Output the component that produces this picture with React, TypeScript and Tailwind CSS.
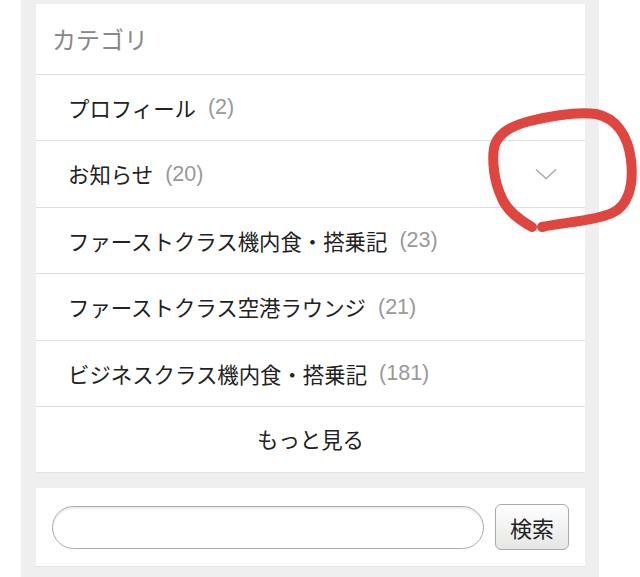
import React from 'react';

type Category = { name: string; count: number };

const categories: Category[] = [
  { name: 'プロフィール', count: 2 },
  { name: 'お知らせ', count: 20 },
  { name: 'ファーストクラス機内食・搭乗記', count: 23 },
  { name: 'ファーストクラス空港ラウンジ', count: 21 },
  { name: 'ビジネスクラス機内食・搭乗記', count: 181 },
];

const rowHeights = ['h-[66px]', 'h-[67px]', 'h-[66px]', 'h-[67px]', 'h-[66px]'];

const jp = { fontFamily: '"Noto Sans CJK JP", "Noto Sans", sans-serif' };
const num = { fontFamily: '"Liberation Sans", Arial, sans-serif' };

const Chevron = () => (
  <svg width="22" height="12" viewBox="0 0 22 12" className="shrink-0">
    <path d="M1 1.5 L11 10.5 L21 1.5" fill="none" stroke="#aaaaaa" strokeWidth="1.5" />
  </svg>
);

const App = () => {
  return (
    <div className="relative w-[640px] h-[577px] bg-white overflow-hidden" style={jp}>
      <div className="ml-[21px] w-[578px] h-full bg-[#efefef] pt-[4px] pl-[15px] pr-[14px]">
        {/* category widget */}
        <div className="bg-white shadow-[0_1px_0_#e4e4e4]">
          <div className="h-[70px] flex items-center pl-[16px] text-[24px] text-[#888]">カテゴリ</div>
          {categories.map((c, i) => (
            <div
              key={c.name}
              className={`${rowHeights[i]} border-t border-[#dedede] flex items-center pl-[32px] pr-[24px] text-[21.4px] text-[#222]`}
            >
              <span className="pt-[1px]">{c.name}</span>
              <span className="ml-[12px] text-[21.5px] text-[#999]" style={num}>
                ({c.count})
              </span>
              {i === 1 && (
                <span className="ml-auto mr-[4px]">
                  <Chevron />
                </span>
              )}
            </div>
          ))}
          <div className="h-[66px] border-t border-[#dedede] flex items-center justify-center text-[21.4px] text-[#222]">
            もっと見る
          </div>
        </div>

        {/* search widget */}
        <div className="mt-[16px] h-[78px] bg-white flex items-center pl-[16px] pr-[16px] gap-[11px] shadow-[0_1px_0_#e4e4e4]">
          <input
            type="text"
            className="w-[432px] h-[43px] rounded-full border border-[#aaa] bg-white shadow-[inset_0_2px_2px_rgba(0,0,0,0.08)] outline-none"
          />
          <button className="w-[74px] h-[46px] rounded-[6px] border border-[#aaa] bg-gradient-to-b from-white to-[#e6e6e6] text-[22px] text-[#222]">
            検索
          </button>
        </div>
      </div>

      {/* hand-drawn red annotation */}
      <svg
        className="absolute left-0 top-0 pointer-events-none"
        width="640"
        height="577"
        viewBox="0 0 640 577"
      >
        <path
          d="M532 227 C518 219 506 210 501 196 C494 181 492 161 494 148 C497 134 510 126 530 121 C555 115 580 112 596 114 C616 118 628 135 631 160 C634 186 628 206 612 213 C595 221 565 222 542 227"
          fill="none"
          stroke="#e04640"
          strokeWidth="10"
          strokeLinecap="round"
          strokeLinejoin="round"
        />
      </svg>
    </div>
  );
};

export default App;
